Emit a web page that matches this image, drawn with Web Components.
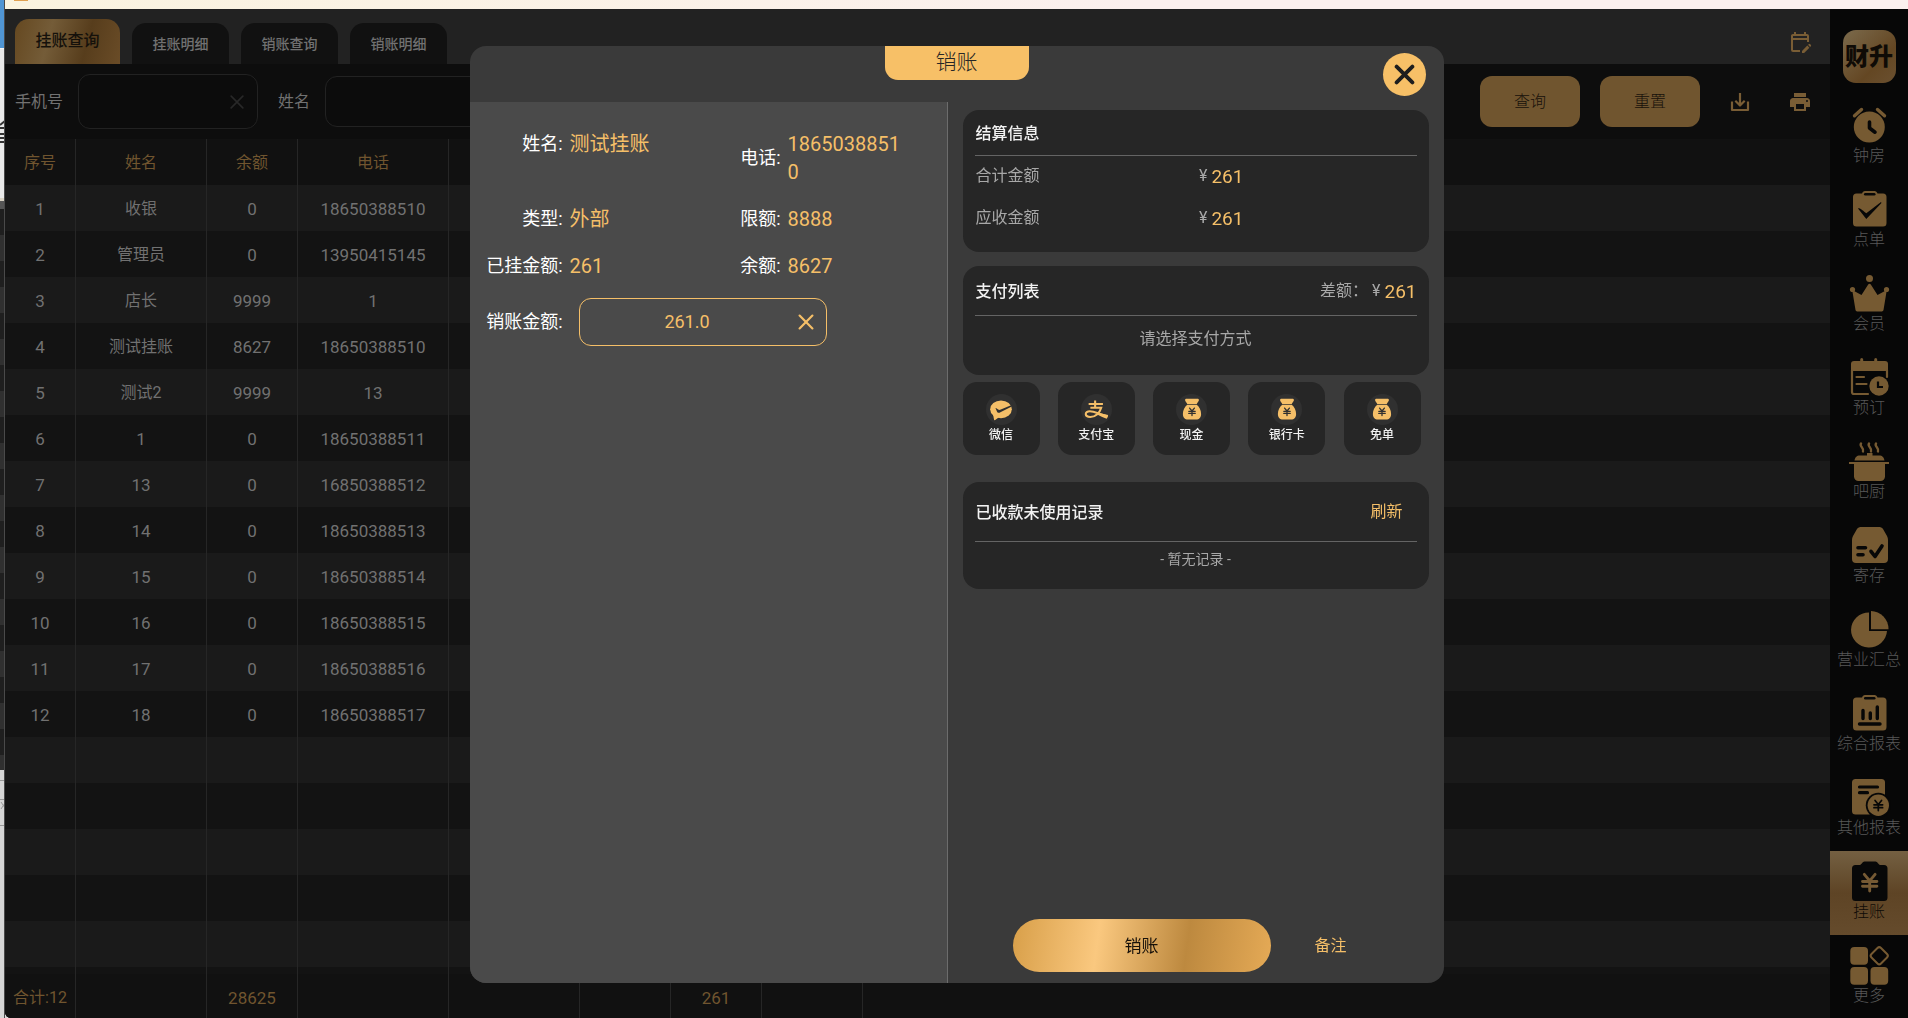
<!DOCTYPE html>
<html lang="zh-CN">
<head>
<meta charset="utf-8">
<title>挂账查询</title>
<style>
  :root {
    --gold: #f5bf68;
    --gold-dim: #70552f;
    --text-dim: #717171;
    --card: #262626;
    --metal: linear-gradient(98deg, #d89f49 0%, #fac87f 33%, #bd893f 67%, #e5aa56 100%);
    --metal-dim: linear-gradient(105deg, #654820 0%, #745c38 33%, #573d1c 67%, #6a4c27 100%);
  }
  html, body { margin: 0; height: 100%; overflow: hidden; }
  body { font: 16px/22px Roboto, "Noto Sans CJK SC", sans-serif; color: #717171; background: #d9d9d9; }
</style>
</head>
<body>
<billing-app></billing-app>

<script>
const RESET = `
  *, *::before, *::after { box-sizing: border-box; }
  button, input { font: inherit; color: inherit; background: none; border: 0; padding: 0; margin: 0; outline: 0; }
  button { cursor: pointer; }
  svg { display: block; }
`;

function define(name, render) {
  customElements.define(name, class extends HTMLElement {
    constructor() {
      super();
      this.attachShadow({ mode: 'open' });
    }
    connectedCallback() {
      const tpl = document.createElement('template');
      tpl.innerHTML = render(this);
      this.shadowRoot.replaceChildren(tpl.content.cloneNode(true));
    }
  });
}

/* Icons: [viewBox size, markup]. --hole is the colour behind the icon. */
const YEN = (x, y, s, c) => `<path transform="translate(${x} ${y}) scale(${s})" d="M-4.5-6 0-.5 4.5-6M-6 0H6M-6 4H6M0-.5V8" fill="none" stroke="${c}" stroke-width="2.4" stroke-linecap="round" stroke-linejoin="round"/>`;
const BOARD = `<path d="M7.500 4.500H13c.6-1.600 1.500-2.500 3-2.500h9.500c1.500 0 2.400.9 3 2.500H34a3.500 3.500 0 0 1 3.500 3.500v26a3.500 3.500 0 0 1-3.500 3.500H7.500A3.500 3.500 0 0 1 4 34V8a3.500 3.500 0 0 1 3.500-3.500z"/><rect x="15" y="4" width="11.500" height="2.600" rx="1.300" fill="var(--hole)"/>`;
const BAG = `<path d="M7 3.500c0-1 .8-1.500 1.800-1.500h12.400c1 0 1.800.5 1.800 1.500 0 1.500-2 3-2.500 4.500h-11C9 6.500 7 5 7 3.500zM9.500 9h11c3 2.500 5 6.500 5 10.500 0 4-2 6.500-6 6.500h-9c-4 0-6-2.500-6-6.500 0-4 2-8 5-10.500z"/>${YEN(15, 16.500, .62, 'var(--hole)')}`;
const ICONS = {
  clock: [40, `<circle cx="20.300" cy="22" r="15.500"/><path d="M5.500 10.800 12.500 4.500M35.500 10.800 28.500 4.500" stroke="currentColor" stroke-width="3.400" stroke-linecap="round"/><path d="M20.500 17v6l5.500 4.200" fill="none" stroke="var(--hole)" stroke-width="3.600" stroke-linecap="round" stroke-linejoin="round"/>`],
  order: [40, `${BOARD}<path d="M9 19.500c1.500-.5 2.500.3 8.300 4.800L32 13c.5.500.4 1 0 1.600L17.300 30z" fill="var(--hole)"/>`],
  crown: [40, `<circle cx="20.500" cy="5.500" r="3.500"/><circle cx="3.500" cy="16.500" r="2.600"/><circle cx="37.500" cy="16.500" r="2.600"/><path d="M3.200 17 12.500 22 19.200 11.500c.6-.9 2-.9 2.600 0L28.500 22l9.300-5-3.300 20c-.2.900-.8 1.400-1.700 1.400H8.200c-.9 0-1.500-.5-1.700-1.400z"/>`],
  booking: [40, `<path d="M5 4h31a3 3 0 0 1 3 3v7H2V7a3 3 0 0 1 3-3z"/><path d="M12.700 2.500v3M26.700 2.500v3" stroke="currentColor" stroke-width="3" stroke-linecap="round"/><path d="M3 13v22a2 2 0 0 0 2 2h14M38 13v7M7.500 20h7.500M7.500 27h10" fill="none" stroke="currentColor" stroke-width="2.200" stroke-linecap="round"/><circle cx="30" cy="29" r="9.700"/><path d="M29 24.500V30h5" fill="none" stroke="var(--hole)" stroke-width="2.200"/>`],
  pot: [40, `<path d="M12 2.500c-2 3 3.500 4.500 2 8M20 2.500c-2 3 3.500 4.500 2 8M27 2.500c-2 3 3.500 4.500 2 8" fill="none" stroke="currentColor" stroke-width="2.400" stroke-linecap="round"/><path d="M18 12h5.500v2.500H18zM11 14.500h19c3.500 0 5 2 5.500 5H5.500c.5-3 2-5 5.500-5zM0 21h40v2h-4v12.500a4.500 4.500 0 0 1-4.500 4.500h-22A4.500 4.500 0 0 1 5 35.500V23H0z"/>`],
  deposit: [40, `<path d="M12.500 2h17c2 0 3.500.5 4.500 2l4 7c.7 1.200 1 2.500 1 4v19a4 4 0 0 1-4 4H7a4 4 0 0 1-4-4V15c0-1.500.3-2.800 1-4l4-7c1-1.500 2.500-2 4.500-2z"/><path d="M9 22.700h7.500M9 29.700h5M22 26.300l4 5.200L33 21" fill="none" stroke="var(--hole)" stroke-width="3.600" stroke-linecap="round" stroke-linejoin="round"/>`],
  pie: [40, `<path d="M20 3.500V22h18A18 17.500 0 1 1 20 3.500z"/><path d="M22 2a18 18 0 0 1 17.500 18.200H22z"/>`],
  report: [40, `${BOARD}<path d="M14 17.500v8M21.300 20v5.500M28.300 14v11.500M10.500 31H31" stroke="var(--hole)" stroke-width="3.400" stroke-linecap="round"/>`],
  other: [40, `<rect x="3" y="2" width="33" height="35.500" rx="3.500"/><path d="M10.500 10h18M10.500 15.700h8" stroke="var(--hole)" stroke-width="3.200" stroke-linecap="round"/><circle cx="29.300" cy="28.300" r="12.500" fill="var(--hole)"/><circle cx="29.300" cy="28.300" r="10.700"/>${YEN(29.300, 27.800, .72, 'var(--hole)')}`],
  credit: [40, `<path d="M6.500 4H11c1.500-.2 2.500-3.500 4.500-3.500h11C28.500.5 29.500 3.800 31 4h4a3.500 3.500 0 0 1 3.500 3.500v29A3.500 3.500 0 0 1 35 40H6.500A3.500 3.500 0 0 1 3 36.500v-29A3.500 3.500 0 0 1 6.500 4z"/>${YEN(20.700, 20.500, 1.200, 'var(--hole)')}`],
  more: [40, `<rect x="1.300" y="2" width="17.700" height="17.700" rx="4"/><rect x="1.300" y="22" width="17.700" height="17.700" rx="4"/><rect x="21.500" y="22" width="17.700" height="17.700" rx="4"/><rect x="23.500" y="4" width="13.500" height="13.500" rx="2.500" transform="rotate(45 30.250 10.750)" fill="none" stroke="currentColor" stroke-width="2"/>`],
  calendar: [24, `<path fill-rule="evenodd" d="M12 22H5a2 2 0 0 1-2-2V6c0-1.100.9-2 2-2h1V2h2v2h8V2h2v2h1c1.100 0 2 .9 2 2v6h-2v-2H5v10h7v2zM5 8h14V6H5v2zm17.130 8.990.71-.71a1 1 0 0 0 0-1.410l-.71-.71a1 1 0 0 0-1.410 0l-.71.710 2.120 2.120zm-.71.71L16.120 23H14v-2.120l5.300-5.300 2.120 2.120z"/>`],
  download: [24, `<path d="M4 11.500v8.500h16v-8.500M12 3v12M7.300 10.800 12 15.500l4.700-4.700" fill="none" stroke="currentColor" stroke-width="2.200" stroke-linejoin="round"/>`],
  print: [24, `<path fill-rule="evenodd" d="M19 8H5c-1.660 0-3 1.340-3 3v6h4v4h12v-4h4v-6c0-1.660-1.340-3-3-3zm-3 11H8v-5h8v5zm3-7a1 1 0 1 1 0-2 1 1 0 0 1 0 2zm-1-9H6v4h12V3z"/>`],
  cross: [24, `<path d="M5 5l14 14M19 5 5 19" fill="none" stroke="currentColor" stroke-width="var(--stroke, 2)" stroke-linecap="round"/>`],
  wechat: [30, `<ellipse cx="15" cy="14.200" rx="12.500" ry="10.200"/><path d="M5.500 18.500 7 26.200c.2.600.8.700 1.300.3L13 23z"/><path d="M8.600 12.800c1-.4 2.200 1.500 3.700 2 1 .3 1.600 0 2.500-.4L28 8.900v1.700L14.300 17.600c-1.500.9-2.800.8-3.700-.4z" fill="var(--hole)"/>`],
  alipay: [30, `<path d="M14 4v8.500M6.500 8h16.500M8.500 12.500h12.500c-1.500 5.500-6.500 10.500-12.500 10.500-7 0-7-6.500-.5-6.500 4.500 0 10 3 20.500 6" fill="none" stroke="currentColor" stroke-width="2.400"/><path d="M17.500 18.200 29 20.800l-1.500 4.400c-3-1-7.500-3-11-5z"/>`],
  bag: [30, BAG],
};
define('ui-icon', el => {
  const [box, body] = ICONS[el.getAttribute('name')];
  return `<style>${RESET}
    :host { display: block; flex: none; width: var(--size, 24px); height: var(--size, 24px); }
    svg { width: 100%; height: 100%; overflow: visible; fill: currentColor; }
  </style><svg viewBox="0 0 ${box} ${box}" aria-hidden="true">${body}</svg>`;
});

/* Sliver of the window lying behind, seen on the left edge. */
define('back-window', () => `<style>${RESET}
  :host { display: flex; flex-direction: column; overflow: hidden; border-right: 1px solid #4a4a4a; }
  .blue { flex: 0 0 48px; background: #5095d3; }
  .page { flex: 0 0 150px; background: #e9e9e9; border-top: 1px solid #f6f6f6; }
  .edge { flex: 0 0 11px; background: #565656; border-top: 3px solid #d8d2c4; }
  .dark { flex: 0 0 561px; background: repeating-linear-gradient(#1f1f1f 0 26px, #303030 26px 52px); }
  .foot { flex: 1; background: #d6d6d6; }
</style>
<div class="blue"></div>
<div class="page"><svg width="5" height="100" fill="none" stroke="#333" stroke-width="2"><path d="M0 76 5 72M0 79h5M0 85h5M0 89h5M0 93h5"/></svg></div>
<div class="edge"></div><div class="dark"></div>
<div class="foot"><svg width="5" height="60" fill="none" stroke="#999"><path d="M0 10.500h5M0 29.500h5M1 32l4 6M5 33l-4 6M0 55.500h5"/></svg></div>`);

define('tab-bar', () => `<style>${RESET}
  :host { display: flex; align-items: flex-end; gap: 12px; height: 55px; padding: 0 18px 0 10px; background: #222; }
  button { width: 97px; height: 41px; border-radius: 14px 14px 0 0; background: #111; font-size: 14px; font-weight: 500; }
  .on { width: 105px; height: 45px; background: var(--metal-dim); color: #15110b; font-size: 16px; padding-bottom: 2px; }
  .tool { width: 24px; height: 24px; margin: 0 0 10px auto; background: none; color: #795d35; border-radius: 0; }
</style>
<button class="on">挂账查询</button><button>挂账明细</button><button>销账查询</button><button>销账明细</button>
<button class="tool" aria-label="日历"><ui-icon name="calendar"></ui-icon></button>`);

define('search-field', el => `<style>${RESET}
  :host { display: flex; align-items: center; gap: 15px; }
  .box { display: flex; align-items: center; width: 180px; height: var(--field-height, 55px); padding-right: 10px; border: 1px solid #222; border-radius: 12px; background: #0c0c0c; color: #282828; }
  input { flex: 1; min-width: 0; padding-left: 12px; color: #717171; }
  ui-icon { --size: 20px; }
</style>
<label for="f">${el.getAttribute('label')}</label>
<span class="box"><input id="f" type="text"><ui-icon name="cross"></ui-icon></span>`);

define('filter-bar', () => `<style>${RESET}
  :host { display: flex; align-items: center; gap: 20px; height: 75px; padding-left: 10px; background: #0d0d0d; white-space: nowrap; }
  .short { --field-height: 51px; }
  .actions { display: flex; align-items: center; gap: 20px; margin-left: auto; color: #795d35; }
  .main { width: 100px; height: 51px; border-radius: 12px; background: var(--gold-dim); color: #17110a; font-weight: 300; }
  .icons { display: flex; margin-left: -10px; }
  .icons button { display: grid; place-items: center; width: 60px; height: 51px; }
</style>
<search-field label="手机号"></search-field><search-field class="short" label="姓名"></search-field>
<div class="actions"><button class="main">查询</button><button class="main">重置</button>
<div class="icons"><button aria-label="下载"><ui-icon name="download"></ui-icon></button><button aria-label="打印"><ui-icon name="print"></ui-icon></button></div></div>`);

const ROWS = [
  ['收银', '0', '18650388510'], ['管理员', '0', '13950415145'], ['店长', '9999', '1'],
  ['测试挂账', '8627', '18650388510'], ['测试2', '9999', '13'], ['1', '0', '18650388511'],
  ['13', '0', '16850388512'], ['14', '0', '18650388513'], ['15', '0', '18650388514'],
  ['16', '0', '18650388515'], ['17', '0', '18650388516'], ['18', '0', '18650388517'],
];
const COLS = [71, 131, 91, 151, 131, 91, 91, 101];
const cells = (values, tag = 'td') =>
  Array.from({ length: 9 }, (_, i) => {
    const v = values[i] ?? '';
    return `<${tag}${/^\d+$/.test(v) ? ' class="n"' : ''}>${v}</${tag}>`;
  }).join('');
define('account-table', () => `<style>${RESET}
  :host { display: block; flex: 1; min-height: 0; overflow: hidden; background: #111; }
  table { width: 100%; table-layout: fixed; border-collapse: separate; border-spacing: 0; text-align: center; }
  th, td { height: 46px; padding: 2px 0 0; font-weight: 400; border-right: 1px solid #262626; white-space: nowrap; }
  th:last-child, td:last-child { border-right: 0; }
  .n { font-size: 17px; }
  thead th { background: #111; color: var(--gold-dim); }
  tbody tr:nth-child(odd) { background: #1a1a1a; }
  tbody tr:nth-child(even) { background: #131313; }
  tfoot { position: sticky; bottom: 0; }
  tfoot td { height: 44px; padding-top: 4px; background: #111; color: var(--gold-dim); }
</style>
<table>
  <colgroup>${COLS.map(w => `<col style="width:${w}px">`).join('')}<col></colgroup>
  <thead><tr>${cells(['序号', '姓名', '余额', '电话'], 'th')}</tr></thead>
  <tbody>${Array.from({ length: 18 }, (_, i) => `<tr>${cells(ROWS[i] ? [i + 1, ...ROWS[i]] : [])}</tr>`).join('')}</tbody>
  <tfoot><tr>${cells(['合计:12', '', '28625', '', '', '', '261'])}</tr></tfoot>
</table>`);

define('nav-item', el => `<style>${RESET}
  :host { display: block; --hole: #070707; color: #585858; }
  button { display: flex; flex-direction: column; align-items: center; width: 100%; height: 84px; padding-top: 10px; white-space: nowrap; font-weight: 300; }
  ui-icon { --size: 40px; color: #765a32; }
  :host([active]) { --hole: #765a34; background: linear-gradient(#746042 0%, #5e4425 50%, #654b2c 100%); color: #0e0a06; }
  :host([active]) ui-icon { color: #080808; }
</style>
<button><ui-icon name="${el.getAttribute('icon')}"></ui-icon><slot></slot></button>`);

define('side-nav', () => `<style>${RESET}
  :host { display: block; background: #070707; overflow: hidden; }
  .logo { display: grid; place-items: center; width: 53px; height: 53px; margin: 21px auto 12px; border-radius: 13px; background: linear-gradient(135deg, #7b6a4c 0%, #644723 65%, #6a5030 100%); color: #0f0b06; font-size: 24px; font-weight: 900; white-space: nowrap; }
</style>
<div class="logo">财升</div>
<nav>
  <nav-item icon="clock">钟房</nav-item><nav-item icon="order">点单</nav-item><nav-item icon="crown">会员</nav-item>
  <nav-item icon="booking">预订</nav-item><nav-item icon="pot">吧厨</nav-item><nav-item icon="deposit">寄存</nav-item>
  <nav-item icon="pie">营业汇总</nav-item><nav-item icon="report">综合报表</nav-item><nav-item icon="other">其他报表</nav-item>
  <nav-item icon="credit" active>挂账</nav-item><nav-item icon="more">更多</nav-item>
</nav>`);

define('info-pair', el => `<style>${RESET}
  :host { display: flex; align-items: center; gap: 7px; width: 218px; line-height: 28px; }
  .k { flex: 0 0 93px; text-align: right; font-size: 18px; color: #fff; white-space: nowrap; }
  .v { flex: 1; min-width: 0; font-size: 20px; color: var(--gold); overflow-wrap: anywhere; }
</style>
<span class="k">${el.getAttribute('label')}:</span><span class="v"><slot></slot></span>`);

define('account-panel', () => `<style>${RESET}
  :host { display: flex; flex-direction: column; gap: 18px; padding-top: 28px; background: #4a4a4a; border-right: 1px solid #6c6c6c; }
  .pairs { display: grid; grid-template-columns: 218px 218px; align-items: start; row-gap: 19px; }
  .amount { display: flex; align-items: center; gap: 16px; }
  label { flex: 0 0 93px; text-align: right; font-size: 18px; color: #fff; white-space: nowrap; }
  .box { display: flex; align-items: center; width: 248px; height: 48px; padding-right: 9px; border: 1px solid var(--gold); border-radius: 12px; color: var(--gold); }
  input { flex: 1; min-width: 0; text-align: center; font-size: 18px; }
  .clear { --size: 22px; --stroke: 2.400; }
</style>
<div class="pairs">
  <info-pair label="姓名">测试挂账</info-pair><info-pair label="电话">18650388510</info-pair>
  <info-pair label="类型">外部</info-pair><info-pair label="限额">8888</info-pair>
  <info-pair label="已挂金额">261</info-pair><info-pair label="余额">8627</info-pair>
</div>
<div class="amount"><label for="a">销账金额:</label>
<span class="box"><input id="a" type="text" value="261.0"><button class="clear" aria-label="清空"><ui-icon name="cross"></ui-icon></button></span></div>`);

define('money-text', () => `<style>${RESET}
  :host { display: inline-flex; align-items: center; gap: 4px; color: #a8a8a8; }
  b { font-size: 19px; font-weight: 400; color: var(--gold); padding-top: 2px; }
</style><span>¥</span><b><slot></slot></b>`);

define('info-card', el => `<style>${RESET}
  :host { display: block; padding: 0 12px; border-radius: 16px; background: var(--card); color: #a8a8a8; }
  header { display: flex; align-items: center; justify-content: space-between; height: var(--head, 46px); padding-left: 1px; border-bottom: 1px solid #646464; }
  h2 { margin: 0; padding-top: 2px; font-size: 16px; font-weight: 500; color: #f2f2f2; }
</style>
<header><h2>${el.getAttribute('heading')}</h2><slot name="extra"></slot></header><slot></slot>`);

define('pay-option', el => `<style>${RESET}
  :host { display: block; --hole: #303030; }
  button { display: flex; flex-direction: column; align-items: center; width: 77px; height: 73px; padding-top: 12px; border-radius: 14px; background: var(--card); color: #f2f2f2; font-size: 12px; line-height: 20px; font-weight: 500; }
  span { display: grid; place-items: center; width: 31px; height: 31px; border-radius: 50%; background: #303030; color: var(--gold); --size: 26px; }
</style>
<button><span><ui-icon name="${el.getAttribute('icon')}"></ui-icon></span><slot></slot></button>`);

define('checkout-panel', () => `<style>${RESET}
  :host { display: flex; flex-direction: column; padding: 8px 15px 11px; }
  .row { display: grid; grid-template-columns: 1fr 1fr; align-items: center; height: 42px; padding: 0 0 2px 1px; }
  .row money-text { padding-left: 3px; }
  .sum { padding-bottom: 12px; margin-bottom: 14px; }
  .pay { --head: 50px; height: 109px; margin-bottom: 7px; }
  .rest { display: flex; align-items: center; white-space: pre; gap: 4px; }
  .hint { margin: 0; text-align: center; line-height: 46px; }
  .options { display: flex; justify-content: space-between; width: 458px; max-width: 100%; margin-bottom: 27px; }
  .records { --head: 60px; height: 107px; }
  .records .hint { font-size: 14px; line-height: 34px; }
  .refresh { color: var(--gold); padding: 10px 14px; }
  .actions { display: flex; align-items: center; gap: 44px; margin-top: auto; padding-left: 50px; }
  .submit { width: 258px; height: 53px; border-radius: 27px; background: var(--metal); color: #17110a; font-size: 17px; }
  .note { color: var(--gold); }
</style>
<info-card class="sum" heading="结算信息">
  <div class="row"><span>合计金额</span><money-text>261</money-text></div>
  <div class="row"><span>应收金额</span><money-text>261</money-text></div>
</info-card>
<info-card class="pay" heading="支付列表">
  <span class="rest" slot="extra"><span>差额：</span><money-text>261</money-text></span>
  <p class="hint">请选择支付方式</p>
</info-card>
<div class="options">
  <pay-option icon="wechat">微信</pay-option><pay-option icon="alipay">支付宝</pay-option><pay-option icon="bag">现金</pay-option>
  <pay-option icon="bag">银行卡</pay-option><pay-option icon="bag">免单</pay-option>
</div>
<info-card class="records" heading="已收款未使用记录">
  <button class="refresh" slot="extra">刷新</button>
  <p class="hint">- 暂无记录 -</p>
</info-card>
<div class="actions"><button class="submit">销账</button><button class="note">备注</button></div>`);

define('modal-dialog', el => `<style>${RESET}
  :host { display: flex; flex-direction: column; width: 974px; max-width: 96%; border-radius: 16px; background: #3a3a3a; overflow: hidden; }
  header { display: grid; grid-template-columns: 1fr auto 1fr; height: 56px; flex: none; }
  h1 { grid-column: 2; margin: 0; width: 144px; height: 34px; border-radius: 0 0 13px 13px; background: #f7c067; color: #262626; text-align: center; font-size: 21px; line-height: 32px; font-weight: 300; }
  .close { display: grid; place-items: center; justify-self: end; width: 43px; height: 43px; margin: 7px 18px 0 0; border-radius: 50%; background: #f7c067; color: #1e1e1e; --size: 27px; --stroke: 3.400; }
  main { flex: 1; min-height: 0; display: grid; grid-template-columns: 478px 1fr; }
</style>
<header><h1>${el.getAttribute('heading')}</h1><button class="close" aria-label="关闭"><ui-icon name="cross"></ui-icon></button></header>
<main><slot></slot></main>`);

define('billing-app', () => `<style>${RESET}
  :host { display: grid; grid-template-columns: 5px 1fr; height: 100vh; }
  .window { display: grid; grid-template-rows: 9px 1fr; min-width: 0; min-height: 0; }
  .title { padding-left: 9px; background: linear-gradient(90deg, #faf3df, #fbf0ee 60%, #fbf0ee); }
  .title i { display: block; width: 14px; height: 1px; background: #e0a050; }
  .stage { position: relative; display: grid; grid-template-columns: 1fr 78px; min-height: 0; overflow: hidden; border-radius: 0 0 0 6px; background: #111; }
  .work { display: flex; flex-direction: column; min-width: 0; min-height: 0; }
  .overlay { position: absolute; inset: 0; display: flex; justify-content: center; padding: 37px 0 35px; }
</style>
<back-window></back-window>
<div class="window">
  <div class="title"><i></i></div>
  <div class="stage">
    <div class="work"><tab-bar></tab-bar><filter-bar></filter-bar><account-table></account-table></div>
    <side-nav></side-nav>
    <div class="overlay"><modal-dialog heading="销账"><account-panel></account-panel><checkout-panel></checkout-panel></modal-dialog></div>
  </div>
</div>`);
</script>
</body>
</html>
